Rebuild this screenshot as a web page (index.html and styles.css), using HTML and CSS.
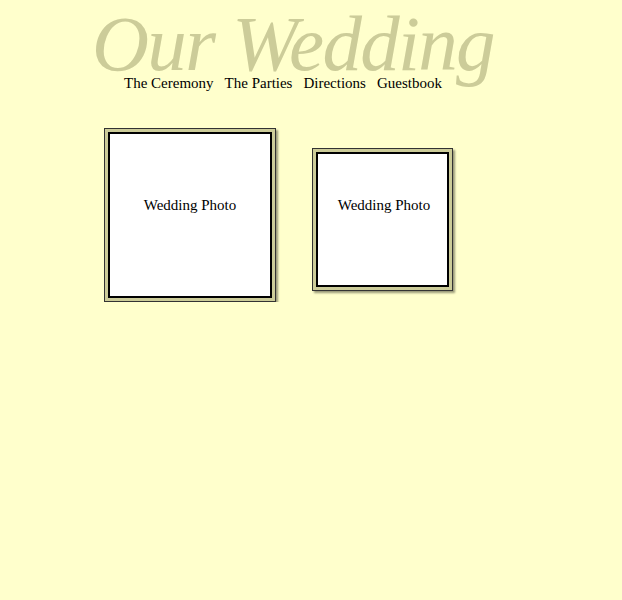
FILE: index.html
```html
<!DOCTYPE html>
<html>
<head>
<meta charset="utf-8">
<title>Our Wedding</title>
<link rel="stylesheet" href="styles.css">
</head>
<body>
<div class="header">
  <h1 class="title">Our Wedding</h1>
  <nav class="nav">
    <a href="#">The Ceremony</a>
    <a href="#">The Parties</a>
    <a href="#">Directions</a>
    <a href="#">Guestbook</a>
  </nav>
</div>
<div class="photos">
  <div class="frame frame-large"><div class="inner">Wedding Photo</div></div>
  <div class="frame frame-small"><div class="inner">Wedding Photo</div></div>
</div>
</body>
</html>
```
FILE: styles.css
```css
html, body {
  margin: 0;
  padding: 0;
  background: #ffffcc;
  font-family: "Liberation Serif", "Times New Roman", serif;
  color: #000;
}
.header {
  padding-left: 92px;
  padding-top: 0;
}
.title {
  margin: 0;
  font-size: 79px;
  font-style: italic;
  font-weight: normal;
  line-height: 88px;
  height: 73px;
  color: #cccc99;
  letter-spacing: -1.7px;
  white-space: nowrap;
}
.nav {
  display: flex;
  gap: 11px;
  margin-left: 32px;
  font-size: 15px;
  line-height: 20px;
}
.nav a {
  color: #000;
  text-decoration: none;
}
.photos {
  display: flex;
  align-items: flex-start;
  padding-left: 104px;
  padding-top: 35px;
  gap: 36px;
}
.frame {
  background: #cccc99;
  border: 1px solid #333;
  padding: 3px;
  box-shadow: 2px 2px 2px #999977;
}
.inner {
  background: #fff;
  border: 2px solid #000;
  text-align: center;
  font-size: 15px;
  line-height: 17px;
  box-sizing: border-box;
}
.frame-large .inner {
  width: 164px;
  height: 166px;
  padding-top: 63px;
}
.frame-small {
  margin-top: 20px;
}
.frame-small .inner {
  width: 133px;
  height: 135px;
  padding-top: 43px;
  padding-left: 3px;
}
```
